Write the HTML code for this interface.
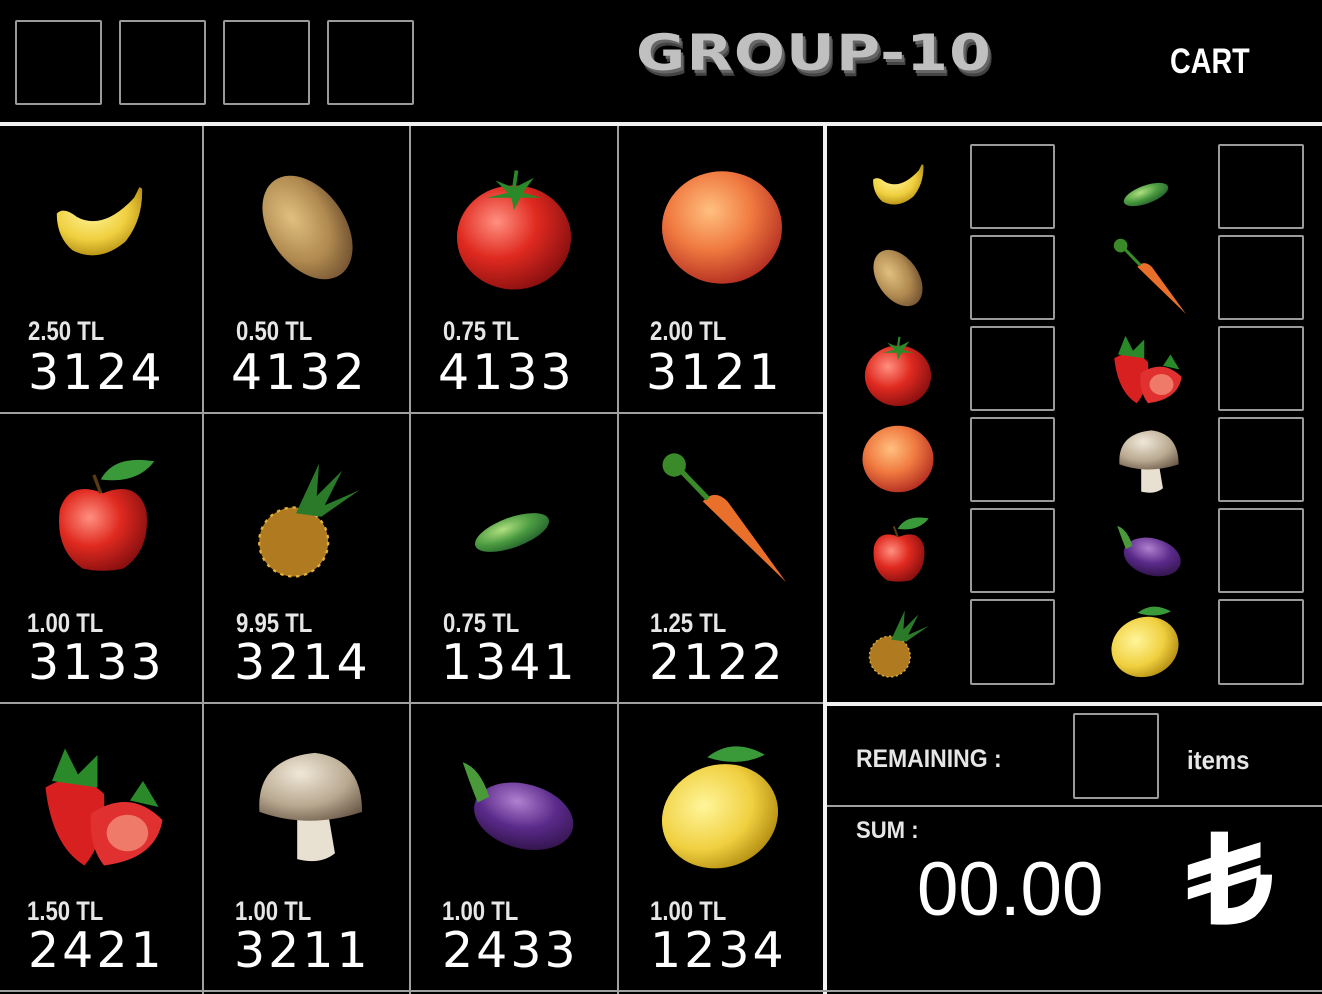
<!DOCTYPE html>
<html><head><meta charset="utf-8">
<style>
html,body{margin:0;padding:0;background:#000;}
body{width:1322px;height:994px;position:relative;overflow:hidden;font-family:"Liberation Sans","DejaVu Sans",sans-serif;color:#fff;}
.a{position:absolute;}
.box{position:absolute;border:2px solid #9a9a9a;border-radius:2px;box-sizing:border-box;}
.vl{position:absolute;width:2px;background:#a0a0a0;}
.hl{position:absolute;height:2px;background:#a0a0a0;}
.price{position:absolute;font-size:27px;font-weight:bold;color:#e6e6e6;transform:scaleX(0.82);transform-origin:left top;letter-spacing:0;}
.code{position:absolute;font-family:"DejaVu Sans",sans-serif;font-size:49px;color:#fff;letter-spacing:3px;line-height:46px;}
svg.f{position:absolute;}
</style></head><body>
<svg width="0" height="0" style="position:absolute">
<defs>
<radialGradient id="gy" cx="40%" cy="35%" r="70%"><stop offset="0" stop-color="#fff59a"/><stop offset="0.6" stop-color="#f0d040"/><stop offset="1" stop-color="#b08a10"/></radialGradient>
<radialGradient id="gr" cx="35%" cy="35%" r="70%"><stop offset="0" stop-color="#ff9080"/><stop offset="0.5" stop-color="#e02a20"/><stop offset="1" stop-color="#8a1010"/></radialGradient>
<radialGradient id="gp" cx="40%" cy="35%" r="70%"><stop offset="0" stop-color="#ffc080"/><stop offset="0.5" stop-color="#f07a40"/><stop offset="1" stop-color="#b02a20"/></radialGradient>
<radialGradient id="gb" cx="40%" cy="35%" r="70%"><stop offset="0" stop-color="#e0c080"/><stop offset="0.6" stop-color="#b08a50"/><stop offset="1" stop-color="#705030"/></radialGradient>
<radialGradient id="gg" cx="40%" cy="30%" r="80%"><stop offset="0" stop-color="#b0e080"/><stop offset="0.5" stop-color="#4a9a40"/><stop offset="1" stop-color="#1e5a2a"/></radialGradient>
<radialGradient id="gv" cx="40%" cy="30%" r="80%"><stop offset="0" stop-color="#b080d0"/><stop offset="0.5" stop-color="#5a2a8a"/><stop offset="1" stop-color="#2a1040"/></radialGradient>
<radialGradient id="gm" cx="40%" cy="30%" r="80%"><stop offset="0" stop-color="#f0e8d8"/><stop offset="0.6" stop-color="#b8a890"/><stop offset="1" stop-color="#6a5a48"/></radialGradient>
<symbol id="banana" viewBox="0 0 100 100"><path d="M2 38 Q10 30 25 42 Q55 58 90 20 L96 8 L99 10 Q100 45 80 70 Q50 95 20 80 Q2 65 2 38 Z" fill="url(#gy)"/></symbol>
<symbol id="potato" viewBox="0 0 100 100"><ellipse cx="50" cy="50" rx="30" ry="46" transform="rotate(-35 50 50)" fill="url(#gb)"/></symbol>
<symbol id="tomato" viewBox="0 0 100 100"><ellipse cx="50" cy="58" rx="46" ry="42" fill="url(#gr)"/><path d="M50 18 L35 12 L45 22 L28 26 L48 26 L50 36 L55 26 L72 26 L57 22 L66 10 Z" fill="#2a8a2a"/><path d="M50 18 L52 4" stroke="#2a8a2a" stroke-width="3"/></symbol>
<symbol id="peach" viewBox="0 0 100 100"><ellipse cx="50" cy="50" rx="48" ry="45" fill="url(#gp)"/></symbol>
<symbol id="apple" viewBox="0 0 100 100"><path d="M50 30 Q20 18 12 45 Q8 80 32 96 Q50 100 68 96 Q92 80 88 45 Q80 18 50 30Z" fill="url(#gr)"/><path d="M48 30 L42 14" stroke="#5a3a10" stroke-width="3"/><path d="M48 18 Q60 -4 95 2 Q80 22 48 18Z" fill="#3a9a3a"/></symbol>
<symbol id="pineapple" viewBox="0 0 100 100"><ellipse cx="38" cy="70" rx="30" ry="30" fill="#b07a20"/><ellipse cx="38" cy="70" rx="30" ry="30" fill="none" stroke="#e0b040" stroke-width="2" stroke-dasharray="3 4"/><path d="M40 45 L60 2 L58 30 L80 8 L65 38 L95 25 L62 48Z" fill="#2a7a2a"/></symbol>
<symbol id="cucumber" viewBox="0 0 100 100"><ellipse cx="50" cy="50" rx="52" ry="20" transform="rotate(-20 50 50)" fill="url(#gg)"/></symbol>
<symbol id="carrot" viewBox="0 0 100 100"><path d="M36 38 Q45 28 55 38 L100 100 Z" fill="#e8702a"/><path d="M40 36 L15 10" stroke="#3a8a2a" stroke-width="4"/><circle cx="14" cy="10" r="9" fill="#3a8a2a"/></symbol>
<symbol id="strawberry" viewBox="0 0 100 100"><path d="M5 35 Q30 20 50 40 Q52 75 35 95 Q10 80 5 35Z" fill="#d82020"/><path d="M40 55 Q70 35 95 60 Q90 90 50 95 Q38 80 40 55Z" fill="#e03030"/><ellipse cx="68" cy="70" rx="16" ry="14" fill="#f07a6a"/><path d="M10 30 L20 5 L30 25 L45 10 L45 35Z M70 45 L80 30 L92 50Z" fill="#2a8a2a"/></symbol>
<symbol id="mushroom" viewBox="0 0 100 100"><path d="M40 55 L40 95 Q60 100 72 90 L66 55Z" fill="#e8e0d0"/><path d="M8 55 Q5 10 55 5 Q95 10 95 55 Q50 70 8 55Z" fill="url(#gm)"/></symbol>
<symbol id="eggplant" viewBox="0 0 100 100"><ellipse cx="58" cy="62" rx="44" ry="28" transform="rotate(15 58 62)" fill="url(#gv)"/><path d="M5 15 Q20 20 28 45 L18 50 Q10 30 5 15Z" fill="#4a9a3a"/></symbol>
<symbol id="lemon" viewBox="0 0 100 100"><ellipse cx="50" cy="58" rx="46" ry="40" transform="rotate(-20 50 58)" fill="url(#gy)"/><path d="M40 12 Q60 -4 85 10 Q65 20 40 12Z" fill="#3a9a3a"/></symbol>
</defs></svg>

<!-- header -->
<div class="box" style="left:15px;top:20px;width:87px;height:85px"></div>
<div class="box" style="left:119px;top:20px;width:87px;height:85px"></div>
<div class="box" style="left:223px;top:20px;width:87px;height:85px"></div>
<div class="box" style="left:327px;top:20px;width:87px;height:85px"></div>
<div class="a" style="left:636px;top:24px;font-family:'DejaVu Sans',sans-serif;font-weight:bold;font-size:50px;letter-spacing:1px;color:#c0c0c0;text-shadow:2px 3px 0 #666,3px 6px 0 #444;transform:scaleX(1.2);transform-origin:left top;">GROUP-10</div>
<div class="a" style="left:1170px;top:42px;font-size:35px;font-weight:bold;transform:scaleX(0.82);transform-origin:left top;">CART</div>

<div class="a" style="left:0;top:122px;width:1322px;height:4px;background:#f0f0f0"></div>
<!-- grid lines -->
<div class="vl" style="left:202px;top:126px;height:868px"></div>
<div class="vl" style="left:409px;top:126px;height:868px"></div>
<div class="vl" style="left:617px;top:126px;height:868px"></div>
<div class="a" style="left:823px;top:126px;width:4px;height:868px;background:#f0f0f0"></div>
<div class="hl" style="left:0;top:412px;width:823px"></div>
<div class="hl" style="left:0;top:702px;width:823px"></div>
<div class="hl" style="left:0;top:990px;width:1322px"></div>

<!-- row 1 -->
<svg class="f" style="left:28px;top:180px" width="142" height="88"><use href="#banana"/></svg>
<svg class="f" style="left:245px;top:165px" width="125" height="125"><use href="#potato"/></svg>
<svg class="f" style="left:452px;top:160px" width="124" height="135"><use href="#tomato"/></svg>
<svg class="f" style="left:652px;top:165px" width="140" height="125"><use href="#peach"/></svg>
<div class="price" style="left:28px;top:316px">2.50 TL</div><div class="code" style="left:28px;top:350px">3124</div>
<div class="price" style="left:236px;top:316px">0.50 TL</div><div class="code" style="left:231px;top:350px">4132</div>
<div class="price" style="left:443px;top:316px">0.75 TL</div><div class="code" style="left:438px;top:350px">4133</div>
<div class="price" style="left:650px;top:316px">2.00 TL</div><div class="code" style="left:646px;top:350px">3121</div>
<!-- row 2 -->
<svg class="f" style="left:46px;top:446px" width="114" height="140"><use href="#apple"/></svg>
<svg class="f" style="left:250px;top:450px" width="115" height="138"><use href="#pineapple"/></svg>
<svg class="f" style="left:446px;top:495px" width="132" height="75"><use href="#cucumber"/></svg>
<svg class="f" style="left:656px;top:452px" width="130" height="130"><use href="#carrot"/></svg>
<div class="price" style="left:27px;top:608px">1.00 TL</div><div class="code" style="left:28px;top:640px">3133</div>
<div class="price" style="left:236px;top:608px">9.95 TL</div><div class="code" style="left:234px;top:640px">3214</div>
<div class="price" style="left:443px;top:608px">0.75 TL</div><div class="code" style="left:441px;top:640px">1341</div>
<div class="price" style="left:650px;top:608px">1.25 TL</div><div class="code" style="left:649px;top:640px">2122</div>
<!-- row 3 -->
<svg class="f" style="left:35px;top:742px" width="138" height="130"><use href="#strawberry"/></svg>
<svg class="f" style="left:250px;top:742px" width="118" height="128"><use href="#mushroom"/></svg>
<svg class="f" style="left:442px;top:745px" width="145" height="115"><use href="#eggplant"/></svg>
<svg class="f" style="left:656px;top:742px" width="128" height="128"><use href="#lemon"/></svg>
<div class="price" style="left:27px;top:896px">1.50 TL</div><div class="code" style="left:28px;top:928px">2421</div>
<div class="price" style="left:235px;top:896px">1.00 TL</div><div class="code" style="left:234px;top:928px">3211</div>
<div class="price" style="left:442px;top:896px">1.00 TL</div><div class="code" style="left:442px;top:928px">2433</div>
<div class="price" style="left:650px;top:896px">1.00 TL</div><div class="code" style="left:650px;top:928px">1234</div>

<!-- cart panel -->
<svg class="f" style="left:857px;top:160px" width="82" height="52"><use href="#banana"/></svg>
<svg class="f" style="left:862px;top:244px" width="72" height="68"><use href="#potato"/></svg>
<svg class="f" style="left:862px;top:333px" width="72" height="74"><use href="#tomato"/></svg>
<svg class="f" style="left:858px;top:422px" width="80" height="74"><use href="#peach"/></svg>
<svg class="f" style="left:866px;top:510px" width="66" height="80"><use href="#apple"/></svg>
<svg class="f" style="left:864px;top:604px" width="68" height="78"><use href="#pineapple"/></svg>
<svg class="f" style="left:1107px;top:172px" width="78" height="45"><use href="#cucumber"/></svg>
<svg class="f" style="left:1110px;top:238px" width="76" height="76"><use href="#carrot"/></svg>
<svg class="f" style="left:1108px;top:332px" width="80" height="75"><use href="#strawberry"/></svg>
<svg class="f" style="left:1114px;top:424px" width="68" height="74"><use href="#mushroom"/></svg>
<svg class="f" style="left:1104px;top:516px" width="86" height="66"><use href="#eggplant"/></svg>
<svg class="f" style="left:1108px;top:604px" width="74" height="74"><use href="#lemon"/></svg>

<div class="box" style="left:970px;top:144px;width:85px;height:85px"></div>
<div class="box" style="left:970px;top:235px;width:85px;height:85px"></div>
<div class="box" style="left:970px;top:326px;width:85px;height:85px"></div>
<div class="box" style="left:970px;top:417px;width:85px;height:85px"></div>
<div class="box" style="left:970px;top:508px;width:85px;height:85px"></div>
<div class="box" style="left:970px;top:599px;width:85px;height:86px"></div>
<div class="box" style="left:1218px;top:144px;width:86px;height:85px"></div>
<div class="box" style="left:1218px;top:235px;width:86px;height:85px"></div>
<div class="box" style="left:1218px;top:326px;width:86px;height:85px"></div>
<div class="box" style="left:1218px;top:417px;width:86px;height:85px"></div>
<div class="box" style="left:1218px;top:508px;width:86px;height:85px"></div>
<div class="box" style="left:1218px;top:599px;width:86px;height:86px"></div>

<div class="a" style="left:827px;top:702px;width:495px;height:4px;background:#f0f0f0"></div>
<div class="hl" style="left:827px;top:805px;width:495px"></div>
<div class="a" style="left:856px;top:745px;font-size:25px;font-weight:bold;color:#e6e6e6;transform:scaleX(0.92);transform-origin:left top;">REMAINING :</div>
<div class="box" style="left:1073px;top:713px;width:86px;height:86px"></div>
<div class="a" style="left:1187px;top:745px;font-size:26px;font-weight:bold;color:#e6e6e6;transform:scaleX(0.92);transform-origin:left top;">items</div>
<div class="a" style="left:856px;top:817px;font-size:24px;font-weight:bold;color:#e6e6e6;transform:scaleX(0.92);transform-origin:left top;">SUM :</div>
<div class="a" style="left:917px;top:850px;font-size:76px;line-height:80px;color:#fff;transform:scaleX(0.98);transform-origin:left top;">00.00</div>
<svg class="f" style="left:1184px;top:826px" width="88" height="102" viewBox="0 0 92 105">
<path d="M28 5 L46 5 L46 85 Q62 85 72 72 Q76 62 76 50 L92 50 Q92 78 74 94 Q60 104 30 102 L28 102 Z" fill="#fff"/>
<path d="M4 40 L80 16 L80 32 L4 56 Z M4 64 L80 40 L80 52 L4 76 Z" fill="#fff"/>
</svg>
</body></html>
